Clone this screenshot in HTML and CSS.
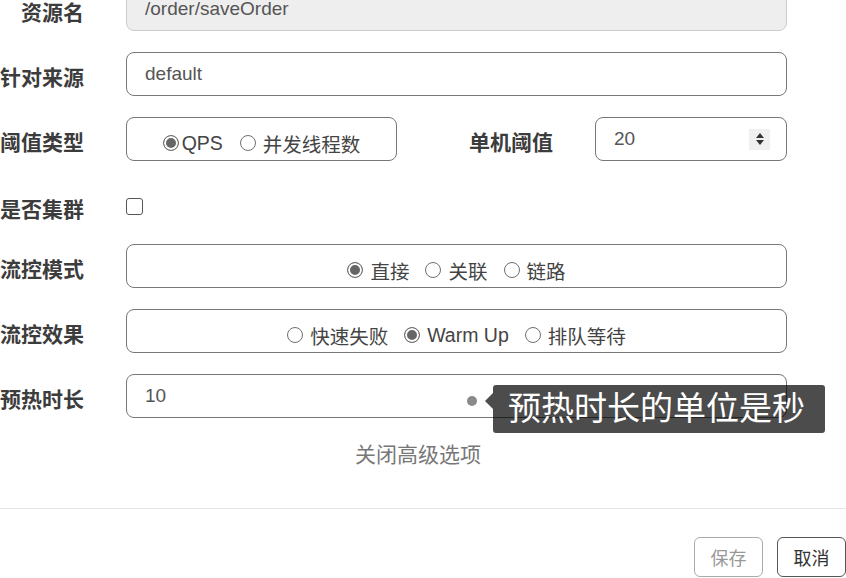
FILE: index.html
```html
<!DOCTYPE html>
<html lang="zh">
<head>
  <meta charset="UTF-8">
  <title>编辑流控规则</title>
  <link rel="stylesheet" href="styles.css">
</head>
<body>

<div class="modal">
  <form class="form">
    <div class="row">
      <label class="lbl">资源名</label>
      <input class="ctl readonly" type="text" value="/order/saveOrder" readonly>
    </div>

    <div class="row">
      <label class="lbl">针对来源</label>
      <input class="ctl" type="text" value="default">
    </div>

    <div class="row split">
      <label class="lbl">阈值类型</label>
      <div class="ctl radios">
        <span class="radio on"></span><span class="opt tight">QPS</span>
        <span class="radio"></span><span class="opt">并发线程数</span>
      </div>
      <label class="lbl">单机阈值</label>
      <div class="ctl number">
        <span class="val">20</span>
        <span class="spin"><i class="up"></i><i class="down"></i></span>
      </div>
    </div>

    <div class="row check-row">
      <label class="lbl">是否集群</label>
      <div><span class="checkbox"></span></div>
    </div>

    <div class="row">
      <label class="lbl">流控模式</label>
      <div class="ctl radios">
        <span class="radio on"></span><span class="opt">直接</span>
        <span class="radio"></span><span class="opt">关联</span>
        <span class="radio"></span><span class="opt">链路</span>
      </div>
    </div>

    <div class="row">
      <label class="lbl">流控效果</label>
      <div class="ctl radios">
        <span class="radio"></span><span class="opt">快速失败</span>
        <span class="radio on"></span><span class="opt">Warm Up</span>
        <span class="radio"></span><span class="opt">排队等待</span>
      </div>
    </div>

    <div class="row">
      <label class="lbl">预热时长</label>
      <div class="field-wrap">
        <input class="ctl" type="text" value="10">
        <span class="dot"></span>
        <div class="tip">预热时长的单位是秒</div>
      </div>
    </div>
  </form>

  <div class="toggle">关闭高级选项</div>

  <div class="footer">
    <button class="btn" disabled>保存</button>
    <button class="btn">取消</button>
  </div>
</div>

</body>
</html>
```

FILE: styles.css
```css
body {
  margin: 0;
  background: #fff;
  font-family: "Liberation Sans", "Noto Sans CJK SC", sans-serif;
  color: #444;
  overflow: hidden;
}
.modal {
  width: 846px;
}
.form {
  margin-top: -13px;
}
.row {
  display: grid;
  grid-template-columns: 84px 661px;
  column-gap: 42px;
  height: 44px;
  margin-bottom: 21px;
  align-items: center;
}
.row.split {
  grid-template-columns: 84px 271px 114px 192px;
}
.check-row {
  height: 34px;
  padding-top: 7px;
}
.lbl {
  text-align: right;
  font-size: 21px;
  font-weight: bold;
  color: #3c3c3c;
  white-space: nowrap;
  padding-top: 3px;
}
.ctl {
  box-sizing: border-box;
  height: 44px;
  width: 100%;
  border: 1px solid #777;
  border-radius: 8px;
  padding: 0 18px;
  font-family: inherit;
  font-size: 19px;
  color: #555;
  background: #fff;
  outline: none;
}
.readonly {
  background: #eee;
  border-color: #ccc;
}
.radios {
  display: flex;
  align-items: center;
  justify-content: center;
  padding: 8px 0 0;
  font-size: 19.5px;
  color: #444;
}
.radio {
  box-sizing: border-box;
  width: 16px;
  height: 16px;
  border: 1.5px solid #6f6f6f;
  border-radius: 50%;
  background: #fff;
  margin-right: 7px;
}
.radio.on {
  background: #666;
  box-shadow: inset 0 0 0 2px #fff;
}
.opt {
  margin-right: 16px;
}
.opt.tight {
  margin-left: -4px;
  margin-right: 17px;
}
.opt:last-child {
  margin-right: 0;
}
.number {
  display: flex;
  align-items: center;
  justify-content: space-between;
  padding-right: 16px;
}
.spin {
  width: 21px;
  height: 21px;
  background: #f0f0f0;
  display: flex;
  flex-direction: column;
  align-items: center;
  justify-content: center;
  gap: 2px;
}
.spin i {
  width: 0;
  height: 0;
  border-left: 4px solid transparent;
  border-right: 4px solid transparent;
}
.spin .up {
  border-bottom: 5px solid #333;
}
.spin .down {
  border-top: 5px solid #333;
}
.checkbox {
  display: block;
  box-sizing: border-box;
  width: 17px;
  height: 17px;
  border: 1px solid #555;
  border-radius: 3px;
}
.field-wrap {
  position: relative;
  height: 44px;
}
.dot {
  position: absolute;
  left: 341px;
  top: 22px;
  width: 10px;
  height: 10px;
  border-radius: 50%;
  background: #8a8a8a;
}
.tip {
  position: absolute;
  left: 367px;
  top: 11px;
  width: 332px;
  height: 48px;
  box-sizing: border-box;
  padding-left: 15px;
  line-height: 48px;
  font-size: 33px;
  color: #fff;
  background: rgba(0, 0, 0, 0.7);
  border-radius: 3px;
  white-space: nowrap;
}
.tip::before {
  content: "";
  position: absolute;
  left: -8px;
  top: 8px;
  border-top: 8px solid transparent;
  border-bottom: 8px solid transparent;
  border-right: 8px solid rgba(0, 0, 0, 0.7);
}
.toggle {
  text-align: center;
  padding-right: 10px;
  line-height: 32px;
  font-size: 21px;
  color: #777;
  margin-bottom: 37px;
}
.footer {
  border-top: 1px solid #e5e5e5;
  padding-top: 28px;
  display: flex;
  justify-content: flex-end;
  gap: 14px;
}
.btn {
  width: 69px;
  height: 40px;
  border: 1px solid #555;
  border-radius: 6px;
  background: #fff;
  font-family: inherit;
  font-size: 18px;
  color: #333;
  padding: 0;
}
.btn:disabled {
  border-color: #aaa;
  color: #999;
}
```
